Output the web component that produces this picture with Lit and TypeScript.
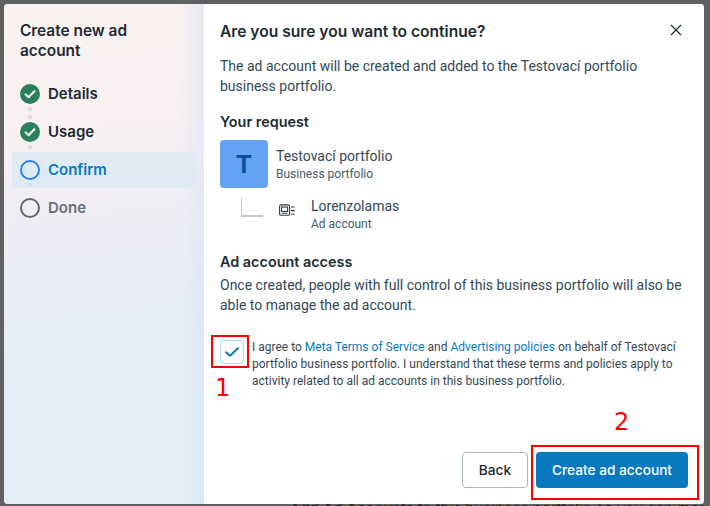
import { LitElement, html, css } from "lit";
import { customElement } from "lit/decorators.js";

const check = html`<svg class="ci" viewBox="0 0 20 20"><circle cx="10" cy="10" r="10" fill="#2b7f5c"/><path d="M5.6 10.4l3 2.9 5.8-6" fill="none" stroke="#fff" stroke-width="2" stroke-linecap="round" stroke-linejoin="round"/></svg>`;

@customElement("app-root")
export class AppRoot extends LitElement {
  static styles = css`
    :host { display: block; width: 710px; height: 506px; position: relative; overflow: hidden; background: #616161; font-family: Roboto, sans-serif; }
    .page { display: flex; flex-direction: column; height: 506px; padding: 4px 6px 0 4px; box-sizing: border-box; }
    .dialog { display: flex; height: 500px; flex: none; background: #fff; border-radius: 4px; overflow: hidden; }
    .under { height: 2px; overflow: hidden; margin-left: 286px; font: 15px/16px Inter, sans-serif; color: #1c1c1c; white-space: nowrap; }
    .under span { display: block; margin-top: -3px; }
    .side { width: 200px; flex: none; box-sizing: border-box; padding: 17px 8px 0; font-family: Inter, sans-serif;
      background: linear-gradient(90deg, transparent 88%, rgba(214,226,244,.55) 100%), linear-gradient(175deg, #fbf2f1 0%, #f8f0f2 25%, #ecedf6 50%, #e3eff8 75%, #e2eff8 100%); }
    .title { font-size: 15.4px; font-weight: 600; line-height: 20px; color: #1c2b33; margin: 0 0 15px; padding: 0 8px; }
    .steps { display: flex; flex-direction: column; gap: 2px; }
    .step { position: relative; display: flex; align-items: center; gap: 8px; height: 36px; padding: 0 8px; border-radius: 4px; font-size: 15px; font-weight: 600; color: #1c2b33; }
    .step span { margin-top: -2px; }
    .step.active { background: #deebf5; color: #0a78be; }
    .step.todo { color: #67707a; }
    .ci { width: 20px; height: 20px; flex: none; display: block; }
    .dot { position: absolute; left: 16px; width: 4px; height: 4px; border-radius: 50%; background: #dcdadf; }
    .d1 { top: 31px; } .d2 { top: 39px; } .d3 { top: -7px; }
    .main { flex: 1; min-width: 0; position: relative; padding: 18px 16px 0; box-sizing: border-box; background: #fff; border-radius: 4px 0 0 0; display: flex; flex-direction: column; color: #344854; font-size: 14px; line-height: 20px; }
    h2 { margin: 0 0 14px; font: 600 15.6px/20px Inter, sans-serif; color: #1c2b33; }
    h3 { margin: 0; font: 600 14.4px/20px Inter, sans-serif; color: #1c2b33; }
    p { margin: 0; }
    .close { position: absolute; top: 19px; right: 21px; width: 14px; height: 14px; display: block; }
    .req { margin-top: 16px; }
    .biz { display: flex; gap: 8px; align-items: flex-start; margin-top: 8px; height: 48px; }
    .avatar { width: 48px; height: 48px; border-radius: 4px; background: #64a2f2; color: #0b4ea2; display: flex; align-items: center; justify-content: center; font: 700 25px/1 "Liberation Sans", sans-serif; flex: none; }
    .info { margin-top: 7px; }
    .sub .info { margin-top: 1px; }
    .nm { font-size: 14px; line-height: 18px; color: #344854; }
    .sb { font-size: 12px; line-height: 16px; margin-top: 1px; color: #465a69; }
    .sub { display: flex; align-items: flex-start; margin-top: 8px; height: 36px; padding-left: 21px; }
    .elbow { width: 21px; height: 17px; border-left: 1px solid #c4c8cc; border-bottom: 2px solid #c4c8cc; flex: none; margin-top: 2px; }
    .adicon { width: 16px; height: 14px; margin: 8px 16px 0; flex: none; display: block; }
    .access { margin-top: 20px; margin-bottom: 3px; }
    .agree { display: flex; gap: 8px; margin-top: 24px; font-size: 12px; line-height: 17px; }
    .agree a { color: #0a78be; text-decoration: none; }
    .cb { width: 24px; height: 24px; box-sizing: border-box; border: 1px solid #cbd2d9; border-radius: 4px; background: #fff; display: flex; align-items: center; justify-content: center; flex: none; margin-top: 1px; }
    .cb svg { width: 14px; height: 10px; display: block; }
    .actions { margin-top: auto; margin-bottom: 16px; display: flex; justify-content: flex-end; gap: 8px; }
    button { height: 36px; box-sizing: border-box; border-radius: 4px; font: 500 13.7px/20px Inter, sans-serif; padding: 0; }
    .back { width: 66px; background: #fff; border: 1px solid #a9b6c2; color: #1c2b33; }
    .create { width: 152px; background: #0a78be; border: 0; color: #fff; }
    .mark { position: absolute; border: 2px solid #f00; box-sizing: border-box; pointer-events: none; }
    .m1 { left: 211px; top: 335px; width: 38px; height: 33px; }
    .m2 { left: 531px; top: 445px; width: 168px; height: 55px; }
    .num { position: absolute; color: #f00; font: 24px/28px "DejaVu Sans", sans-serif; }
    .n1 { left: 215px; top: 374px; }
    .n2 { left: 614px; top: 408px; }
  `;

  render() {
    return html`
      <div class="page">
        <div class="dialog">
          <aside class="side">
            <div class="title">Create new ad<br />account</div>
            <div class="steps">
              <div class="step">${check}<span>Details</span><i class="dot d1"></i><i class="dot d2"></i></div>
              <div class="step">${check}<span>Usage</span><i class="dot d1"></i></div>
              <div class="step active">
                <svg class="ci" viewBox="0 0 20 20"><circle cx="10" cy="10" r="9" fill="none" stroke="#2f7ef2" stroke-width="2"/></svg>
                <span>Confirm</span>
              </div>
              <div class="step todo">
                <i class="dot d3"></i>
                <svg class="ci" viewBox="0 0 20 20"><circle cx="10" cy="10" r="9" fill="none" stroke="#5f6a74" stroke-width="2"/></svg>
                <span>Done</span>
              </div>
            </div>
          </aside>
          <main class="main">
            <svg class="close" viewBox="0 0 14 14"><path d="M2 2l10 10M12 2L2 12" stroke="#1c2b33" stroke-width="1.2" fill="none"/></svg>
            <h2>Are you sure you want to continue?</h2>
            <p>The ad account will be created and added to the Testovací portfolio<br />business portfolio.</p>
            <h3 class="req">Your request</h3>
            <div class="biz">
              <div class="avatar">T</div>
              <div class="info"><div class="nm">Testovací portfolio</div><div class="sb">Business portfolio</div></div>
            </div>
            <div class="sub">
              <div class="elbow"></div>
              <svg class="adicon" viewBox="0 0 16 14" fill="none" stroke="#2c3a44" stroke-width="1.1">
                <rect x=".6" y=".9" width="10" height="10.4" rx="1.4"/><rect x="2.6" y="3" width="6" height="4.4"/>
                <path d="M2.6 9.3h6M12 3h3.6M12 6.6h3.6M12 10.2h3.6"/>
              </svg>
              <div class="info"><div class="nm">Lorenzolamas</div><div class="sb">Ad account</div></div>
            </div>
            <h3 class="access">Ad account access</h3>
            <p>Once created, people with full control of this business portfolio will also be<br />able to manage the ad account.</p>
            <div class="agree">
              <div class="cb"><svg viewBox="0 0 14 10"><path d="M1 5.2l4 3.6L13 1.2" fill="none" stroke="#0a78be" stroke-width="2" stroke-linecap="round" stroke-linejoin="round"/></svg></div>
              <div>I agree to <a>Meta Terms of Service</a> and <a>Advertising policies</a> on behalf of Testovací<br />portfolio business portfolio. I understand that these terms and policies apply to<br />activity related to all ad accounts in this business portfolio.</div>
            </div>
            <div class="actions">
              <button class="back">Back</button>
              <button class="create">Create ad account</button>
            </div>
          </main>
        </div>
        <div class="under"><span>Add Ad Accounts to this business portfolio so you can manage all</span></div>
      </div>
      <div class="mark m1"></div>
      <div class="mark m2"></div>
      <div class="num n1">1</div>
      <div class="num n2">2</div>
    `;
  }
}
